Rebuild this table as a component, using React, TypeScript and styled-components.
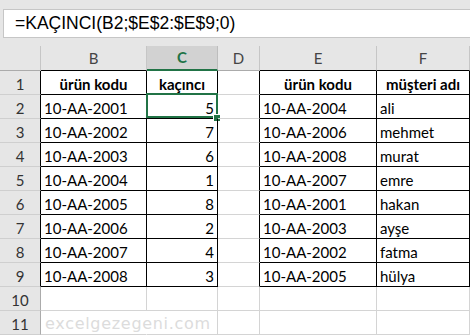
import React from "react";
import styled, { createGlobalStyle } from "styled-components";

const GlobalStyle = createGlobalStyle`
  html, body {
    margin: 0;
    padding: 0;
    background: #fff;
  }
  body {
    width: 470px;
    height: 335px;
    overflow: hidden;
    font-family: Lato, "Noto Sans", sans-serif;
  }
`;

const GRID = "#d4d4d4";
const HEAD_LINE = "#ababab";
const GREEN = "#217346";

const Window = styled.div`
  width: 470px;
  height: 335px;
  overflow: hidden;
  background: #e6e6e6;
  display: flex;
  flex-direction: column;
`;

const FormulaBar = styled.div`
  height: 47px;
  padding: 9px 0 0 3px;
  box-sizing: border-box;
`;

const FormulaInput = styled.div`
  height: 29px;
  box-sizing: border-box;
  background: #fff;
  border: 1px solid #c6c6c6;
  border-right: none;
  padding-left: 11px;
  display: flex;
  align-items: center;
  font-family: "Liberation Sans", Arial, sans-serif;
  font-size: 17.5px;
  color: #000;
  white-space: nowrap;
`;

const Sheet = styled.div`
  display: grid;
  grid-template-columns: 41px 106px 71px 42px 117px 93px;
  grid-template-rows: 25px repeat(11, 24px);
  background: #fff;
`;

const Corner = styled.div`
  background: #e6e6e6;
  border-right: 1px solid #c6c6c6;
  border-bottom: 1px solid ${HEAD_LINE};
`;

const ColHeader = styled.div<{ $active?: boolean; $bottom: string }>`
  box-sizing: border-box;
  display: flex;
  align-items: flex-end;
  justify-content: center;
  padding-bottom: 3px;
  font-size: 15px;
  line-height: 18px;
  background: ${(p) => (p.$active ? "#d2d2d2" : "#e6e6e6")};
  color: ${(p) => (p.$active ? GREEN : "#444")};
  font-weight: ${(p) => (p.$active ? 700 : 400)};
  border-right: 1px solid ${(p) => (p.$active ? "#bdbdbd" : "#c6c6c6")};
  border-bottom: ${(p) => (p.$active ? `2px solid ${GREEN}` : `1px solid ${p.$bottom}`)};
`;

const RowHeader = styled.div<{ $right: string }>`
  box-sizing: border-box;
  display: flex;
  align-items: flex-end;
  justify-content: center;
  padding-bottom: 1px;
  font-size: 15px;
  line-height: 18px;
  color: #333;
  background: #e6e6e6;
  border-right: 1px solid ${(p) => p.$right};
  border-bottom: 1px solid #cfcfcf;
`;

const Cell = styled.div<{
  $right: string;
  $bottom: string;
  $align?: "left" | "right";
  $bold?: boolean;
  $center?: boolean;
}>`
  position: relative;
  box-sizing: border-box;
  display: flex;
  align-items: flex-end;
  justify-content: ${(p) => (p.$center ? "center" : p.$align === "right" ? "flex-end" : "flex-start")};
  padding: 0 3px 1px 3px;
  font-size: 15px;
  line-height: 18px;
  color: #000;
  font-weight: ${(p) => (p.$bold ? 700 : 400)};
  white-space: nowrap;
  border-right: ${(p) => (p.$right === "none" ? "1px solid transparent" : `1px solid ${p.$right}`)};
  border-bottom: 1px solid ${(p) => p.$bottom};
`;

const Watermark = styled.span`
  font-family: "DejaVu Sans", Verdana, sans-serif;
  font-size: 16px;
  letter-spacing: 0.7px;
  color: #dcdcdc;
  overflow: visible;
  padding-left: 1px;
`;

const Selection = styled.div`
  position: absolute;
  left: -1px;
  top: -2px;
  right: -1px;
  bottom: 0;
  border: 2px solid ${GREEN};
  pointer-events: none;
`;

const FillHandle = styled.div`
  position: absolute;
  right: -3px;
  bottom: -3px;
  width: 6px;
  height: 6px;
  background: ${GREEN};
  box-shadow: 0 0 0 1px #fff;
`;

const codes = ["10-AA-2001", "10-AA-2002", "10-AA-2003", "10-AA-2004", "10-AA-2005", "10-AA-2006", "10-AA-2007", "10-AA-2008"];
const ranks = [5, 7, 6, 1, 8, 2, 4, 3];
const lookup = [
  ["10-AA-2004", "ali"],
  ["10-AA-2006", "mehmet"],
  ["10-AA-2008", "murat"],
  ["10-AA-2007", "emre"],
  ["10-AA-2001", "hakan"],
  ["10-AA-2003", "ayşe"],
  ["10-AA-2002", "fatma"],
  ["10-AA-2005", "hülya"],
];

const letters = ["B", "C", "D", "E", "F"];
const tableCols = [1, 2, 4, 5];

const inTable = (r: number, c: number) => r >= 1 && r <= 9 && tableCols.includes(c);

const cellContent = (r: number, c: number): React.ReactNode => {
  if (r === 1) {
    if (c === 1 || c === 4) return "ürün kodu";
    if (c === 2) return "kaçıncı";
    if (c === 5) return "müşteri adı";
    return null;
  }
  if (r >= 2 && r <= 9) {
    const i = r - 2;
    if (c === 1) return codes[i];
    if (c === 2) return ranks[i];
    if (c === 4) return lookup[i][0];
    if (c === 5) return lookup[i][1];
  }
  if (r === 11 && c === 1) return <Watermark>excelgezegeni.com</Watermark>;
  return null;
};

export default function App() {
  const rows = Array.from({ length: 11 }, (_, i) => i + 1);

  return (
    <Window>
      <GlobalStyle />
      <FormulaBar>
        <FormulaInput>=KAÇINCI(B2;$E$2:$E$9;0)</FormulaInput>
      </FormulaBar>
      <Sheet>
        <Corner />
        {letters.map((l, i) => {
          const c = i + 1;
          return (
            <ColHeader key={l} $active={l === "C"} $bottom={inTable(1, c) ? "#000" : HEAD_LINE}>
              {l}
            </ColHeader>
          );
        })}
        {rows.map((r) => (
          <React.Fragment key={r}>
            <RowHeader $right={inTable(r, 1) ? "#000" : HEAD_LINE}>{r}</RowHeader>
            {letters.map((l, i) => {
              const c = i + 1;
              let right = inTable(r, c) || inTable(r, c + 1) ? "#000" : GRID;
              if (r === 11 && c === 1) right = "none";
              const bottom = inTable(r, c) || inTable(r + 1, c) ? "#000" : GRID;
              const selected = r === 2 && c === 2;
              return (
                <Cell
                  key={l}
                  $right={right}
                  $bottom={bottom}
                  $bold={r === 1}
                  $center={r === 1}
                  $align={c === 2 ? "right" : "left"}
                >
                  {cellContent(r, c)}
                  {selected && (
                    <>
                      <Selection />
                      <FillHandle />
                    </>
                  )}
                </Cell>
              );
            })}
          </React.Fragment>
        ))}
      </Sheet>
    </Window>
  );
}
